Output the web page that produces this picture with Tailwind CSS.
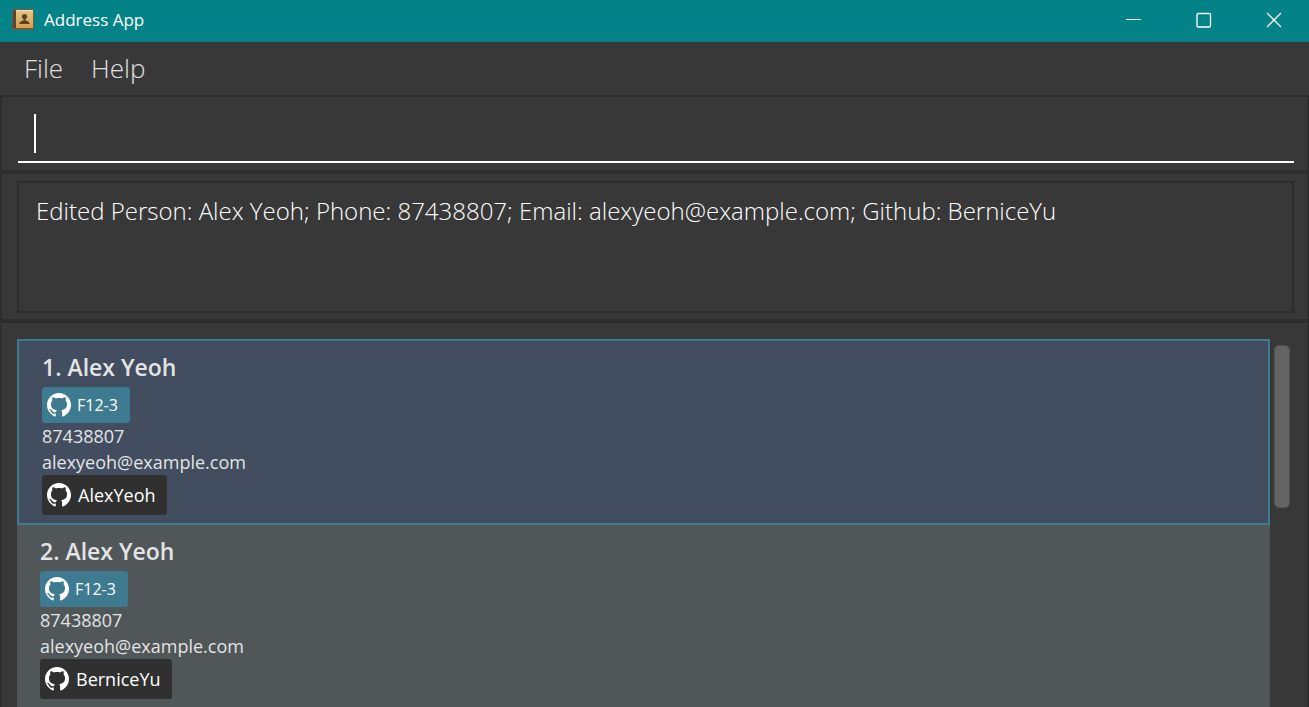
<!DOCTYPE html>
<html lang="en">
<head>
<meta charset="utf-8">
<title>Address App</title>
<meta name="viewport" content="width=device-width, initial-scale=1">
<script src="https://cdn.jsdelivr.net/npm/@tailwindcss/browser@4"></script>
</head>
<body class="flex h-screen flex-col overflow-hidden bg-[#383838] font-['Open_Sans','Noto_Sans',sans-serif] text-white">
<svg class="hidden" aria-hidden="true">
  <symbol id="github" viewBox="0 0 24 24">
    <path fill="currentColor" d="M12 0C5.400 0 0 5.400 0 12c0 5 3.200 9.700 8 11.400.6.1.8-.2.8-.6v-2.200c-2.800.5-4.200-.6-4.900-2.200-.4-.9-.9-1.500-1.600-1.900-.4-.4.7-.6 1.400-.2.8.4 1.300 1.300 1.800 2 .8 1.100 2 1.200 3.500.7.100-.8.500-1.400.9-1.700-3.700-.5-5.900-2.100-5.900-6.200 0-1.500.5-2.700 1.400-3.600-.3-1-.3-2.200.1-3.300 1.300-.1 2.600.6 3.500 1.200 1.900-.5 4.100-.5 6 0 .9-.6 2.200-1.300 3.500-1.200.4 1.100.4 2.300.1 3.300.9.900 1.400 2.100 1.400 3.600 0 4.100-2.200 5.700-5.900 6.200.6.500 1 1.500 1 2.600v2.900c0 .5.300.7.900.6C20.800 21.700 24 17 24 12c0-6.600-5.400-12-12-12z"/>
  </symbol>
</svg>

<header class="flex h-[42px] shrink-0 items-center bg-[#038387] pb-0.5 pl-3">
  <svg class="h-[22px] w-[22px]" viewBox="0 0 22 22" aria-hidden="true">
    <defs><linearGradient id="cover" x1="0" y1="0" x2="0" y2="1"><stop offset="0" stop-color="#e6c48d"/><stop offset="1" stop-color="#d69f4b"/></linearGradient></defs>
    <rect x="0" y="0" width="22" height="21" rx="1" fill="#6b5a42"/>
    <rect x="1" y="1" width="3" height="18" fill="#5a4639"/>
    <rect x="4" y="1" width="17" height="18" fill="url(#cover)"/>
    <path d="M4 1.500h17" stroke="#f5dfb6"/>
    <circle cx="12.500" cy="7.500" r="2.600" fill="#544329"/>
    <path d="M11.500 9h2v2.500c2 .5 4 1 4.300 3.500h-10.600c.3-2.500 2.300-3 4.300-3.500z" fill="#544329"/>
  </svg>
  <h1 class="ml-[10px] grow text-[17px]">Address App</h1>
  <button class="flex h-full w-[70px] items-center justify-center" aria-label="Minimize"><svg class="h-4 w-4" viewBox="0 0 16 16" stroke="white"><path d="M0 7.500h15"/></svg></button>
  <button class="flex h-full w-[70px] items-center justify-center" aria-label="Maximize"><svg class="h-4 w-4" viewBox="0 0 16 16" fill="none" stroke="white" stroke-width="1.300"><rect x="1" y="1.500" width="13.500" height="13.500" rx="1.200"/></svg></button>
  <button class="flex h-full w-[70px] items-center justify-center" aria-label="Close"><svg class="h-4 w-4" viewBox="0 0 16 16" stroke="white" stroke-width="1.300"><path d="M1 1l14 14M15 1L1 15"/></svg></button>
</header>

<nav class="flex h-[53px] shrink-0 items-center gap-7 pl-6 text-[26px] font-light text-[#e0e0e0]">
  <button>File</button>
  <button>Help</button>
</nav>

<main class="flex min-h-0 grow flex-col">
  <section class="h-[77px] shrink-0 border-2 border-[#2d2d2d] pt-4 pr-[13px] pl-4">
    <label class="relative block h-[50px] border-b-2 border-white">
      <input type="text" aria-label="Command" class="h-full w-full bg-transparent px-4 text-[26px] font-light outline-none">
      <span class="absolute top-[1px] left-4 h-[39px] w-[2px] bg-white"></span>
    </label>
  </section>

  <section class="shrink-0 border-2 border-[#2d2d2d] pt-[7px] pr-[13px] pb-1.5 pl-[15px]">
    <output class="block h-[132px] border-2 border-[#2d2d2d] px-[17px] pt-[11px] text-[24px] leading-[34px] font-light">Edited Person: Alex Yeoh; Phone: 87438807; Email: alexyeoh@example.com; Github: BerniceYu</output>
  </section>

  <section class="flex min-h-0 grow border-2 border-b-0 border-[#2d2d2d] pt-4 pr-[17px] pl-[15px]">
    <ol class="min-w-0 grow overflow-hidden bg-[#515658] text-[18px] leading-[26px] text-[#e2e4e6]">
      <li class="flex flex-col items-start border-2 border-[#3e7b91] bg-[#424d5f] pt-[7px] pb-2 pl-[23px]">
        <h2 class="pb-px text-[23px] leading-[38px] font-semibold">1. Alex Yeoh</h2>
        <button class="flex h-9 items-center gap-1.5 rounded-[3px] bg-[#3e7b91] pr-3 pl-[5px] text-base text-white"><svg class="h-6 w-6"><use href="#github"/></svg>F12-3</button>
        <p>87438807</p>
        <p>alexyeoh@example.com</p>
        <button class="flex h-10 items-center gap-[7px] rounded-[3px] bg-[#303030] pr-[11px] pl-[5px] text-white"><svg class="h-6 w-6"><use href="#github"/></svg>AlexYeoh</button>
      </li>
      <li class="flex flex-col items-start bg-[#515658] pt-[7px] pb-2 pl-[23px]">
        <h2 class="pb-px text-[23px] leading-[38px] font-semibold">2. Alex Yeoh</h2>
        <button class="flex h-9 items-center gap-1.5 rounded-[3px] bg-[#3e7b91] pr-3 pl-[5px] text-base text-white"><svg class="h-6 w-6"><use href="#github"/></svg>F12-3</button>
        <p>87438807</p>
        <p>alexyeoh@example.com</p>
        <button class="flex h-10 items-center gap-[7px] rounded-[3px] bg-[#303030] pr-[11px] pl-[5px] text-white"><svg class="h-6 w-6"><use href="#github"/></svg>BerniceYu</button>
      </li>
    </ol>
    <div class="mt-1.5 ml-1 h-[163px] w-4 shrink-0 rounded-[5px] border border-[#535353] bg-[#646464]"></div>
  </section>
</main>
</body>
</html>
